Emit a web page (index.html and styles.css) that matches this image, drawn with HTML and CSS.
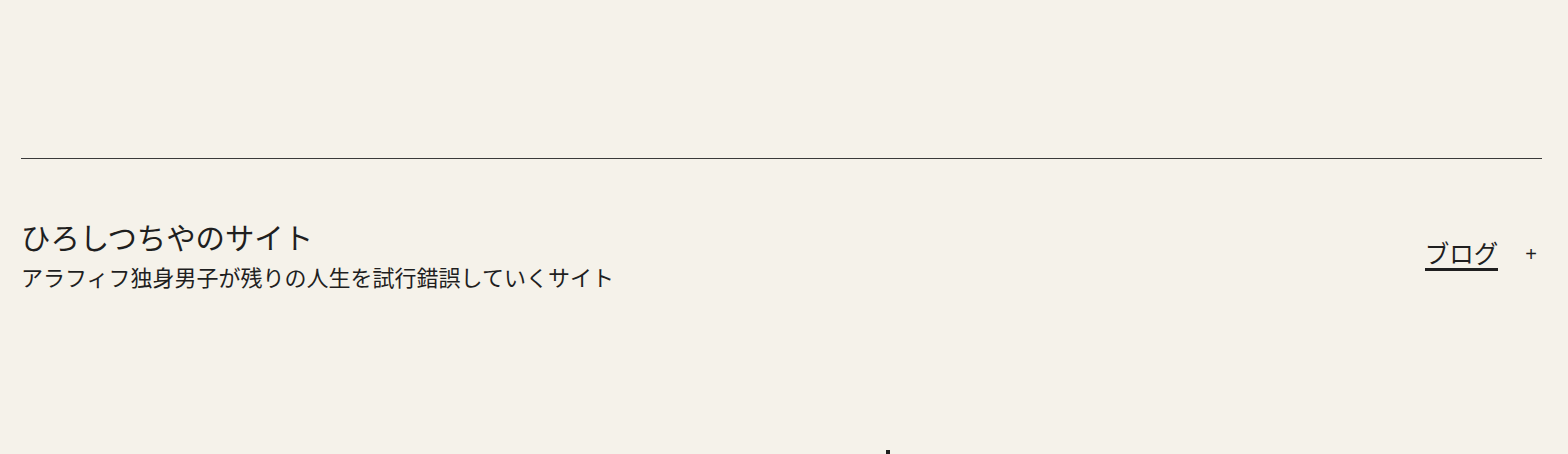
FILE: index.html
```html
<!DOCTYPE html>
<html lang="ja">
<head>
<meta charset="utf-8">
<link rel="stylesheet" href="styles.css">
</head>
<body>
<div class="page">
  <div class="top-space"></div>
  <hr class="rule">
  <header class="site-header">
    <div class="brand">
      <div class="site-title">ひろしつちやのサイト</div>
      <div class="site-desc">アラフィフ独身男子が残りの人生を試行錯誤していくサイト</div>
    </div>
    <nav class="nav">
      <a class="nav-link" href="#">ブログ</a>
      <span class="nav-plus">+</span>
    </nav>
  </header>
  <div class="below">
    <span class="mark"></span>
  </div>
</div>
</body>
</html>
```
FILE: styles.css
```css
html, body {
  margin: 0;
  padding: 0;
  background: #f5f2ea;
  height: 100%;
  overflow: hidden;
}
.page {
  padding: 0 31px 0 21px;
  font-family: "Noto Sans CJK JP", "Noto Sans", sans-serif;
  color: #1f1f1f;
}
.top-space {
  height: 158px;
}
.rule {
  margin: 0 -5px 0 0;
  border: 0;
  border-top: 1px solid #3a3a3a;
  height: 0;
}
.site-header {
  display: flex;
  justify-content: space-between;
  align-items: center;
  padding-top: 57px;
}
.site-title {
  font-size: 29.4px;
  line-height: 40px;
}
.site-desc {
  font-size: 22px;
  line-height: 32px;
  margin-top: 4px;
}
.nav {
  display: flex;
  align-items: center;
  gap: 27px;
}
.nav-link {
  font-size: 24.5px;
  line-height: 30px;
  color: #1f1f1f;
  text-decoration: none;
  border-bottom: 3px solid #1f1f1f;
}
.nav-plus {
  font-size: 20px;
  line-height: 30px;
  font-family: "Liberation Sans", sans-serif;
}
.below {
  display: flex;
  justify-content: center;
  padding-top: 158px;
}
.mark {
  display: block;
  width: 4px;
  height: 6px;
  background: #1f1f1f;
  margin-left: 218px;
}
```
